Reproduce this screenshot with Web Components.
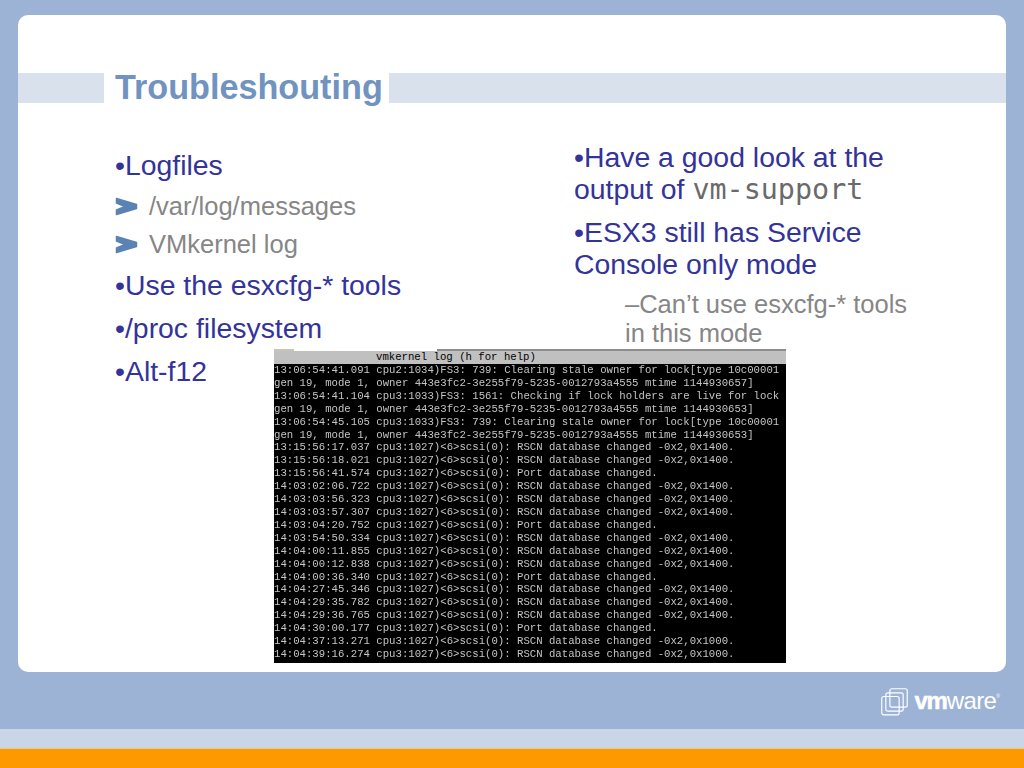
<!DOCTYPE html>
<html>
<head>
<meta charset="utf-8">
<title>Troubleshouting</title>
<style>
  html, body { margin: 0; height: 100%; }
  body { font-family: "Liberation Sans", Arial, sans-serif; background: #9db3d5; }
  sub-item + bullet-item { margin-top: 10px; }
</style>
</head>
<body>
<slide-page>
  <slide-title>Troubleshouting</slide-title>
  <bullet-list slot="left">
    <bullet-item>Logfiles</bullet-item>
    <sub-item>/var/log/messages</sub-item>
    <sub-item>VMkernel log</sub-item>
    <bullet-item>Use the esxcfg-* tools</bullet-item>
    <bullet-item>/proc filesystem</bullet-item>
    <bullet-item>Alt-f12</bullet-item>
  </bullet-list>
  <bullet-list slot="right">
    <bullet-item>Have a good look at the output of <code>vm-support</code></bullet-item>
    <bullet-item>ESX3 still has Service Console only mode</bullet-item>
    <dash-item>Can’t use esxcfg-* tools in this mode</dash-item>
  </bullet-list>
  <log-window slot="overlay"></log-window>
</slide-page>

<script>
class SlidePage extends HTMLElement {
  connectedCallback() {
    this.attachShadow({ mode: 'open' });
    this.shadowRoot.innerHTML = `
      <style>
        :host { display: flex; flex-direction: column; height: 768px; overflow: hidden; }
        .card {
          position: relative;
          margin: 15px 18px 0;
          height: 657px;
          flex: none;
          background: #fff;
          border-radius: 10px;
          padding-top: 58px;
          box-sizing: border-box;
        }
        .cols {
          display: grid;
          grid-template-columns: 361px 340px;
          column-gap: 98px;
          padding: 0 0 0 97px;
        }
        .left { padding-top: 46px; }
        .right { padding-top: 38px; }
        .bottom { flex: 1; display: flex; flex-direction: column; }
        .logo-row { flex: 1; display: flex; justify-content: flex-end; padding: 15px 24px 0 0; }
        .pale { height: 20px; background: #cad6e7; border-bottom: 1px solid #e6c98c; box-sizing: border-box; }
        .orange { height: 19px; background: #ff9900; }
        .overlay { position: absolute; left: 256px; top: 334px; }
      </style>
      <div class="card">
        <slot></slot>
        <div class="cols">
          <div class="left"><slot name="left"></slot></div>
          <div class="right"><slot name="right"></slot></div>
        </div>
        <div class="overlay"><slot name="overlay"></slot></div>
      </div>
      <div class="bottom">
        <div class="logo-row"><vmware-logo></vmware-logo></div>
        <div class="pale"></div>
        <div class="orange"></div>
      </div>
    `;
  }
}

class SlideTitle extends HTMLElement {
  connectedCallback() {
    this.attachShadow({ mode: 'open' });
    this.shadowRoot.innerHTML = `
      <style>
        :host { display: flex; height: 30px; background: #d9e2ec; padding-left: 86px; }
        h1 {
          margin: 0;
          padding: 0 6px 0 11px;
          height: 30px;
          line-height: 29px;
          background: #fff;
          color: #7193bf;
          font-size: 34.2px;
          font-weight: bold;
          white-space: nowrap;
        }
      </style>
      <h1><slot></slot></h1>
    `;
  }
}

class BulletList extends HTMLElement {
  connectedCallback() {
    this.attachShadow({ mode: 'open' });
    this.shadowRoot.innerHTML = `
      <style>:host { display: block; }</style>
      <slot></slot>
    `;
  }
}

class BulletItem extends HTMLElement {
  connectedCallback() {
    this.attachShadow({ mode: 'open' });
    this.shadowRoot.innerHTML = `
      <style>
        :host { display: block; color: #333399; font-size: 28.4px; line-height: 32px; margin-bottom: 11px; }
        ::slotted(code) { font-family: "DejaVu Sans Mono", monospace; font-size: 28.4px; line-height: 0; color: #6a6a6a; }
      </style>
      •<slot></slot>
    `;
  }
}

class SubItem extends HTMLElement {
  connectedCallback() {
    this.attachShadow({ mode: 'open' });
    this.shadowRoot.innerHTML = `
      <style>
        :host { display: flex; align-items: center; gap: 11px; color: #868686; font-size: 25.5px; line-height: 30px; margin: -1px 0 9px; }
        svg { flex: none; width: 23px; height: 19px; }
      </style>
      <svg viewBox="0 0 23 19"><path d="M1.5 1.5 L21.5 7.5 V11.5 L1.5 17.5 V13 L10 9.5 L1.5 6 Z" fill="#5b82b5" stroke="#5b82b5" stroke-width="1.5" stroke-linejoin="round"/></svg>
      <span><slot></slot></span>
    `;
  }
}

class DashItem extends HTMLElement {
  connectedCallback() {
    this.attachShadow({ mode: 'open' });
    this.shadowRoot.innerHTML = `
      <style>
        :host { display: block; color: #868686; font-size: 25.5px; line-height: 29px; padding-left: 51px; margin-top: -1px; }
      </style>
      –<slot></slot>
    `;
  }
}

class LogWindow extends HTMLElement {
  connectedCallback() {
    const rscn = 'cpu3:1027)<6>scsi(0): RSCN database changed -0x2,0x1400.';
    const port = 'cpu3:1027)<6>scsi(0): Port database changed.';
    const owner = 'gen 19, mode 1, owner 443e3fc2-3e255f79-5235-0012793a4555 mtime ';
    const lines = [
      '13:06:54:41.091 cpu2:1034)FS3: 739: Clearing stale owner for lock[type 10c00001',
      owner + '1144930657]',
      '13:06:54:41.104 cpu3:1033)FS3: 1561: Checking if lock holders are live for lock',
      owner + '1144930653]',
      '13:06:54:45.105 cpu3:1033)FS3: 739: Clearing stale owner for lock[type 10c00001',
      owner + '1144930653]',
      '13:15:56:17.037 ' + rscn,
      '13:15:56:18.021 ' + rscn,
      '13:15:56:41.574 ' + port,
      '14:03:02:06.722 ' + rscn,
      '14:03:03:56.323 ' + rscn,
      '14:03:03:57.307 ' + rscn,
      '14:03:04:20.752 ' + port,
      '14:03:54:50.334 ' + rscn,
      '14:04:00:11.855 ' + rscn,
      '14:04:00:12.838 ' + rscn,
      '14:04:00:36.340 ' + port,
      '14:04:27:45.346 ' + rscn,
      '14:04:29:35.782 ' + rscn,
      '14:04:29:36.765 ' + rscn,
      '14:04:30:00.177 ' + port,
      '14:04:37:13.271 ' + rscn.replace('0x1400', '0x1000'),
      '14:04:39:16.274 ' + rscn.replace('0x1400', '0x1000')
    ];
    this.attachShadow({ mode: 'open' });
    this.shadowRoot.innerHTML = `
      <style>
        :host { display: block; width: 512px; height: 314px; font-family: "Liberation Mono", monospace; font-size: 10.67px; }
        .edge { display: flex; justify-content: space-between; height: 2px; }
        .edge i { display: block; height: 2px; background: #8c8c8c; width: 349px; }
        .edge i:first-child { width: 20px; background: #c9c3b4; }
        .bar {
          height: 13px;
          line-height: 13px;
          background: #c0c0c0;
          color: #000;
          padding-left: 102px;
          white-space: pre;
        }
        .screen { height: 299px; background: #000; }
        pre { margin: 0; font: inherit; line-height: 12.9px; color: #c4c4c4; filter: blur(0.35px); }
      </style>
      <div class="edge"><i></i><i></i></div>
      <div class="bar">vmkernel log (h for help)</div>
      <div class="screen"><pre></pre></div>
    `;
    this.shadowRoot.querySelector('pre').textContent = lines.join('\n');
  }
}

class VmwareLogo extends HTMLElement {
  connectedCallback() {
    this.attachShadow({ mode: 'open' });
    this.shadowRoot.innerHTML = `
      <style>
        :host { display: flex; align-items: center; gap: 6px; height: 29px; color: #fff; font-size: 24px; }
        svg { width: 27px; height: 28px; flex: none; }
        div { margin-top: -2px; }
        b { font-weight: bold; letter-spacing: -1.2px; -webkit-text-stroke: 0.5px #fff; }
        span { font-weight: normal; letter-spacing: -0.6px; }
        sup { font-size: 5px; vertical-align: 11px; line-height: 0; }
      </style>
      <svg viewBox="0 0 28 29" fill="none" stroke="#fff" stroke-width="1.2">
        <rect x="0.8" y="8.8" width="18" height="19" rx="2"/>
        <rect x="5" y="5" width="18" height="19" rx="2"/>
        <rect x="9.2" y="0.8" width="18" height="19" rx="2"/>
      </svg>
      <div><b>vm</b><span>ware</span><sup>®</sup></div>
    `;
  }
}

customElements.define('slide-page', SlidePage);
customElements.define('slide-title', SlideTitle);
customElements.define('bullet-list', BulletList);
customElements.define('bullet-item', BulletItem);
customElements.define('sub-item', SubItem);
customElements.define('dash-item', DashItem);
customElements.define('log-window', LogWindow);
customElements.define('vmware-logo', VmwareLogo);
</script>
</body>
</html>
